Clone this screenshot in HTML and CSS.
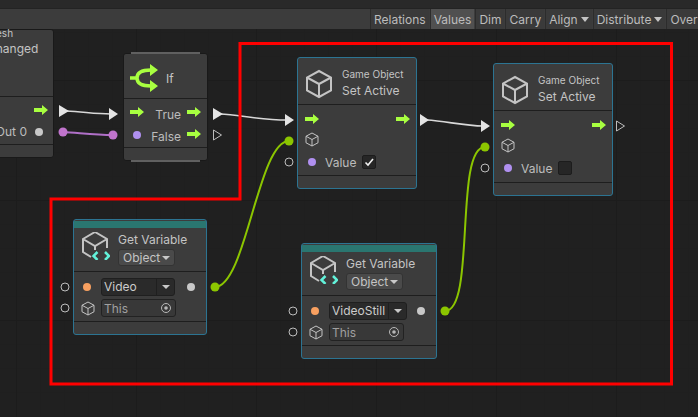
FILE: index.html
```html
<!DOCTYPE html>
<html lang="en">
<head>
    <meta charset="UTF-8">
    <title>Script Graph</title>
    <link rel="stylesheet" href="styles.css">
</head>
<body>
    <svg class="defs" width="0" height="0">
        <symbol id="arrow" viewBox="0 0 14 10"><path d="M0 3H8V0L14 5L8 10V7H0Z"/></symbol>
        <symbol id="cube" viewBox="0 0 28 30"><path d="M14 2L26 8.5V21.5L14 28L2 21.5V8.5ZM2 8.5L14 15L26 8.5M14 15V28"/></symbol>
        <symbol id="target" viewBox="0 0 12 12"><circle cx="6" cy="6" r="4.5" fill="none" stroke="#b8b8b8"/><circle cx="6" cy="6" r="1.8" fill="#b8b8b8"/></symbol>
        <symbol id="var-icon" viewBox="0 0 28 28">
            <path class="var-cube" d="M9 25L1 20V7L13 0L25 7V16M1 7L13 14L25 7M13 14V18"/>
            <path class="var-code" d="M15.5 20L11.5 24L15.5 28M23 20L27 24L23 28"/>
        </symbol>
    </svg>

    <div class="top-strip"></div>
    <div class="toolbar">
        <span class="tool-btn">Relations</span>
        <span class="tool-btn active">Values</span>
        <span class="tool-btn">Dim</span>
        <span class="tool-btn">Carry</span>
        <span class="tool-btn caret">Align</span>
        <span class="tool-btn caret">Distribute</span>
        <span class="tool-btn">Overview</span>
    </div>

    <div class="canvas">
        <!-- event node, cut off by the left edge -->
        <div class="node node-event">
            <div class="header header-event">
                <span class="small-title">Mesh</span>
                <span class="title">Changed</span>
            </div>
            <div class="ports ports-event">
                <div class="row row-end"><svg class="arrow"><use href="#arrow"/></svg></div>
                <div class="row row-end"><span class="label">Out 0</span><i class="dot dot-gray"></i></div>
            </div>
            <div class="footer"></div>
        </div>

        <div class="node node-if">
            <div class="header header-if">
                <svg class="if-icon" viewBox="0 0 28 28">
                    <path class="if-lines" d="M0 14H7M7 14C7 9 12 6 21 6M7 14C7 19 12 22 21 22"/>
                    <path class="if-heads" d="M20 0L28 6L20 12ZM20 16L28 22L20 28Z"/>
                </svg>
                <span class="title">If</span>
            </div>
            <div class="ports ports-if">
                <div class="row">
                    <svg class="arrow"><use href="#arrow"/></svg>
                    <span class="label push">True</span>
                    <svg class="arrow"><use href="#arrow"/></svg>
                </div>
                <div class="row">
                    <i class="dot dot-purple"></i>
                    <span class="label push">False</span>
                    <svg class="arrow"><use href="#arrow"/></svg>
                </div>
            </div>
            <div class="footer"></div>
        </div>

        <div class="node selected node-set-a">
            <div class="header header-set">
                <svg class="cube-big"><use href="#cube"/></svg>
                <div class="titles">
                    <span class="small-title">Game Object</span>
                    <span class="title">Set Active</span>
                </div>
            </div>
            <div class="ports ports-set">
                <div class="row row-between"><svg class="arrow"><use href="#arrow"/></svg><svg class="arrow"><use href="#arrow"/></svg></div>
                <div class="row"><svg class="cube-small"><use href="#cube"/></svg></div>
                <div class="row row-value"><i class="dot dot-purple"></i><span class="label">Value</span>
                    <span class="check"><svg viewBox="0 0 12 12"><path d="M2.5 6.5L5 9L10 3"/></svg></span>
                </div>
            </div>
            <div class="footer"></div>
        </div>

        <div class="node selected node-set-b">
            <div class="header header-set">
                <svg class="cube-big"><use href="#cube"/></svg>
                <div class="titles">
                    <span class="small-title">Game Object</span>
                    <span class="title">Set Active</span>
                </div>
            </div>
            <div class="ports ports-set">
                <div class="row row-between"><svg class="arrow"><use href="#arrow"/></svg><svg class="arrow"><use href="#arrow"/></svg></div>
                <div class="row"><svg class="cube-small"><use href="#cube"/></svg></div>
                <div class="row row-value"><i class="dot dot-purple"></i><span class="label">Value</span><span class="check"></span></div>
            </div>
            <div class="footer"></div>
        </div>

        <div class="node selected node-var node-var-a">
            <div class="teal-bar"></div>
            <div class="header header-var">
                <svg class="var-icon"><use href="#var-icon"/></svg>
                <div class="titles">
                    <span class="title">Get Variable</span>
                    <span class="kind-select">Object<b class="tri"></b></span>
                </div>
            </div>
            <div class="ports ports-var">
                <div class="row">
                    <i class="dot dot-orange"></i>
                    <span class="name-field"><span class="name-text">Video</span><span class="name-caret"><b class="tri"></b></span></span>
                    <i class="dot dot-gray dot-out"></i>
                </div>
                <div class="row">
                    <svg class="cube-small"><use href="#cube"/></svg>
                    <span class="this-field">This<svg class="target"><use href="#target"/></svg></span>
                </div>
            </div>
            <div class="footer"></div>
        </div>

        <div class="node selected node-var node-var-b">
            <div class="teal-bar"></div>
            <div class="header header-var">
                <svg class="var-icon"><use href="#var-icon"/></svg>
                <div class="titles">
                    <span class="title">Get Variable</span>
                    <span class="kind-select">Object<b class="tri"></b></span>
                </div>
            </div>
            <div class="ports ports-var">
                <div class="row">
                    <i class="dot dot-orange"></i>
                    <span class="name-field"><span class="name-text">VideoStill</span><span class="name-caret"><b class="tri"></b></span></span>
                    <i class="dot dot-gray dot-out"></i>
                </div>
                <div class="row">
                    <svg class="cube-small"><use href="#cube"/></svg>
                    <span class="this-field">This<svg class="target"><use href="#target"/></svg></span>
                </div>
            </div>
            <div class="footer"></div>
        </div>

        <!-- edges, outer ports and the red annotation, in canvas coordinates -->
        <svg class="overlay" viewBox="0 29 698 388">
            <path class="edge-white" d="M66 111C85 112 95 114 111 114"/>
            <path class="edge-white" d="M220 114C240 115 260 120 287 120"/>
            <path class="edge-white" d="M427 120C445 121 465 126 483 126"/>
            <path class="edge-purple" d="M63 132C80 133 95 135 113 135"/>
            <path class="edge-green" d="M215 287C246 287 258 141 289 141"/>
            <path class="edge-green" d="M445 311C476 311 454 147 485 147"/>

            <path class="tri-white" d="M59 105L69 111L59 117ZM109 108L118 114L109 120ZM213 108L223 114L213 120ZM285 114L294 120L285 126ZM420 114L429 120L420 126ZM481 120L490 126L481 132Z"/>
            <path class="tri-hollow" d="M213.5 130L221.5 135L213.5 140ZM616.5 121L624.5 126L616.5 131Z"/>

            <circle class="port-purple" cx="63" cy="132" r="4.5"/>
            <circle class="port-purple" cx="113" cy="135" r="4.5"/>
            <circle class="port-green" cx="215" cy="287" r="4.5"/>
            <circle class="port-green" cx="445" cy="311" r="4.5"/>
            <circle class="port-green" cx="289" cy="141" r="4.5"/>
            <circle class="port-green" cx="485" cy="147" r="4.5"/>

            <circle class="port-open" cx="289" cy="162" r="4"/>
            <circle class="port-open" cx="485" cy="168" r="4"/>
            <circle class="port-open" cx="65" cy="287" r="4"/>
            <circle class="port-open" cx="65" cy="308" r="4"/>
            <circle class="port-open" cx="293" cy="311" r="4"/>
            <circle class="port-open" cx="293" cy="332" r="4"/>

            <path class="red-box" d="M240 199V43.5H671.5V384H51V199Z"/>
        </svg>
    </div>
</body>
</html>
```

FILE: styles.css
```css
* {
    box-sizing: border-box;
}
body {
    margin: 0;
    width: 698px;
    height: 417px;
    overflow: hidden;
    display: flex;
    flex-direction: column;
    background: #202020;
    color: #c4c4c4;
    font-family: Inter, "Liberation Sans", sans-serif;
    font-size: 12px;
}
.defs {
    position: absolute;
}
.top-strip {
    height: 9px;
    background: #292929;
    border-bottom: 1px solid #232323;
}
.toolbar {
    height: 20px;
    flex: none;
    display: flex;
    gap: 2px;
    padding-left: 371px;
    background: #3c3c3c;
    overflow: hidden;
    white-space: nowrap;
}
.tool-btn {
    flex: none;
    display: flex;
    align-items: center;
    gap: 3px;
    padding: 0 3px;
    background: #3a3a3a;
    box-shadow: -1px 0 0 #2c2c2c;
    color: #bcbcbc;
}
.tool-btn.active {
    background: #505050;
}
.tool-btn.caret::after {
    content: "";
    border: 4px solid transparent;
    border-top: 5px solid #c4c4c4;
    border-bottom: 0;
}

.canvas {
    position: relative;
    flex: 1;
    overflow: hidden;
    background-color: #202020;
    background-image:
        linear-gradient(#1c1c1c 1px, transparent 1px),
        linear-gradient(90deg, #1c1c1c 1px, transparent 1px),
        linear-gradient(#1f1f1f 1px, transparent 1px),
        linear-gradient(90deg, #1f1f1f 1px, transparent 1px);
    background-size: 120px 120px, 120px 120px, 24px 24px, 24px 24px;
    background-position: 0 51px, 16px 0, 0 3px, 16px 0;
}
.overlay {
    position: absolute;
    inset: 0;
    width: 698px;
    height: 388px;
}

/* nodes sit freely on the graph */
.node {
    position: absolute;
    display: flex;
    flex-direction: column;
    background: #3c3c3c;
    border: 1px solid #191919;
    border-radius: 3px;
}
.node.selected {
    border-color: #2c7492;
}
.node-event {
    left: -60px;
    top: 0;
    width: 114px;
    height: 129px;
}
.node-if {
    left: 123px;
    top: 24px;
    width: 85px;
    height: 108px;
}
.node-if::before,
.node-if::after {
    content: "";
    position: absolute;
    left: 7px;
    right: 7px;
    height: 2px;
    background: #606060;
}
.node-if::before {
    top: -2px;
}
.node-if::after {
    bottom: -2px;
}
.node-set-a {
    left: 297px;
    top: 28px;
    width: 120px;
    height: 132px;
}
.node-set-b {
    left: 493px;
    top: 34px;
    width: 120px;
    height: 133px;
}
.node-var-a {
    left: 73px;
    top: 190px;
    width: 134px;
    height: 116px;
}
.node-var-b {
    left: 301px;
    top: 214px;
    width: 136px;
    height: 116px;
}

.header {
    flex: none;
    display: flex;
    border-bottom: 1px solid #1e1e1e;
}
.header-event {
    height: 67px;
    flex-direction: column;
    padding-left: 46px;
    line-height: 15px;
}
.header-event .small-title {
    height: 14px;
    margin-top: -3px;
}
.header-if {
    height: 45px;
    align-items: center;
    gap: 8px;
    padding: 4px 0 0 6px;
}
.header-set {
    height: 47px;
    align-items: center;
    gap: 9px;
    padding-left: 7px;
}
.header-set .cube-big {
    margin-top: 6px;
}
.header-var {
    height: 44px;
    align-items: flex-start;
    gap: 8px;
    padding: 4px 0 0 8px;
}
.titles {
    display: flex;
    flex-direction: column;
}
.header-set .titles {
    gap: 2px;
    margin-top: 3px;
}
.header-var .titles {
    gap: 2px;
}
.title {
    font-size: 12px;
    line-height: 15px;
}
.small-title {
    font-size: 10px;
    line-height: 13px;
}
.teal-bar {
    flex: none;
    height: 7px;
    margin-top: 1px;
    background: #2a7670;
}

.ports {
    flex: 1;
    display: flex;
    flex-direction: column;
    padding: 0 6px;
}
.ports-event {
    padding: 2px 5px 0;
    gap: 1px;
}
.ports-event .dot {
    margin-right: 5px;
}
.ports-if {
    padding-top: 3px;
    gap: 1px;
}
.ports-if .arrow {
    margin-bottom: 2px;
}
.ports-if .label {
    margin-top: 3px;
}
.ports-set {
    padding-top: 3px;
    padding-left: 7px;
}
.ports-var {
    padding: 6px 0 0 8px;
    gap: 3px;
}
.row {
    height: 21px;
    flex: none;
    display: flex;
    align-items: center;
}
.ports-var .row {
    height: 18px;
}
.row-end {
    justify-content: flex-end;
    gap: 8px;
}
.row-between {
    justify-content: space-between;
}
.row-value {
    height: 24px;
}
.row-value .label {
    margin: 0 6px 0 9px;
}
.push {
    margin: 0 6px 0 auto;
}
.label {
    color: #bcbcbc;
}

.arrow {
    width: 14px;
    height: 10px;
    flex: none;
    fill: #a8ff40;
}
.cube-big {
    width: 28px;
    height: 30px;
    flex: none;
    fill: none;
    stroke: #c4c4c4;
    stroke-width: 2;
}
.cube-small {
    width: 14px;
    height: 15px;
    flex: none;
    fill: none;
    stroke: #c4c4c4;
    stroke-width: 2;
}
.ports-var .cube-small {
    margin-left: -1px;
}
.var-icon {
    width: 28px;
    height: 28px;
    flex: none;
    overflow: visible;
}
.var-cube {
    fill: none;
    stroke: #c4c4c4;
    stroke-width: 2;
}
.var-code {
    fill: none;
    stroke: #62f2da;
    stroke-width: 2.5;
}
.if-icon {
    width: 28px;
    height: 28px;
    flex: none;
}
.if-lines {
    fill: none;
    stroke: #a8ff40;
    stroke-width: 3.5;
}
.if-heads {
    fill: #a8ff40;
}

.dot {
    display: block;
    flex: none;
    width: 8px;
    height: 8px;
    border-radius: 50%;
}
.dot-gray {
    background: #c8c8c8;
}
.dot-purple {
    background: #b090f0;
    margin-left: 3px;
}
.dot-orange {
    background: #f8a060;
    margin-left: 1px;
    margin-right: 10px;
}
.dot-out {
    margin-left: auto;
    margin-right: 11px;
}
.check {
    width: 14px;
    height: 14px;
    background: #262626;
    border: 1px solid #1c1c1c;
    border-radius: 2px;
    display: flex;
}
.check svg {
    fill: none;
    stroke: #f0f0f0;
    stroke-width: 1.6;
}

.kind-select {
    width: 57px;
    height: 17px;
    display: flex;
    align-items: center;
    justify-content: space-between;
    padding: 0 4px;
    background: #4a4a4a;
    border: 1px solid #333;
    border-radius: 3px;
}
.tri {
    display: block;
    border: 4px solid transparent;
    border-top: 4px solid #c8c8c8;
    border-bottom: 0;
}
.name-field {
    display: flex;
    height: 18px;
    border: 1px solid #1f1f1f;
    border-radius: 3px;
    background: #2a2a2a;
    color: #ccc;
}
.name-text {
    padding: 0 2px;
    line-height: 16px;
    border-right: 1px solid #1f1f1f;
}
.node-var-a .name-text {
    width: 55px;
}
.node-var-b .name-text {
    width: 59px;
}
.name-caret {
    width: 17px;
    display: flex;
    align-items: center;
    justify-content: center;
}
.this-field {
    width: 75px;
    height: 18px;
    margin-left: 6px;
    display: flex;
    align-items: center;
    justify-content: space-between;
    padding: 0 3px 0 2px;
    background: #383838;
    border: 1px solid #222;
    border-radius: 3px;
    color: #a0a0a0;
}
.target {
    width: 12px;
    height: 12px;
}

.footer {
    flex: none;
    height: 13px;
    border-top: 1px solid #1e1e1e;
}

.edge-white,
.edge-purple,
.edge-green {
    fill: none;
}
.edge-white {
    stroke: #d8d8d8;
    stroke-width: 1.6;
}
.edge-purple {
    stroke: #b070c8;
    stroke-width: 1.8;
}
.edge-green {
    stroke: #8cc600;
    stroke-width: 2;
}
.tri-white {
    fill: #e4e4e4;
}
.tri-hollow {
    fill: none;
    stroke: #bdbdbd;
}
.port-purple {
    fill: #c074cc;
}
.port-green {
    fill: #8cc600;
}
.port-open {
    fill: none;
    stroke: #bdbdbd;
}
.red-box {
    fill: none;
    stroke: #ff0000;
    stroke-width: 3;
}
```
